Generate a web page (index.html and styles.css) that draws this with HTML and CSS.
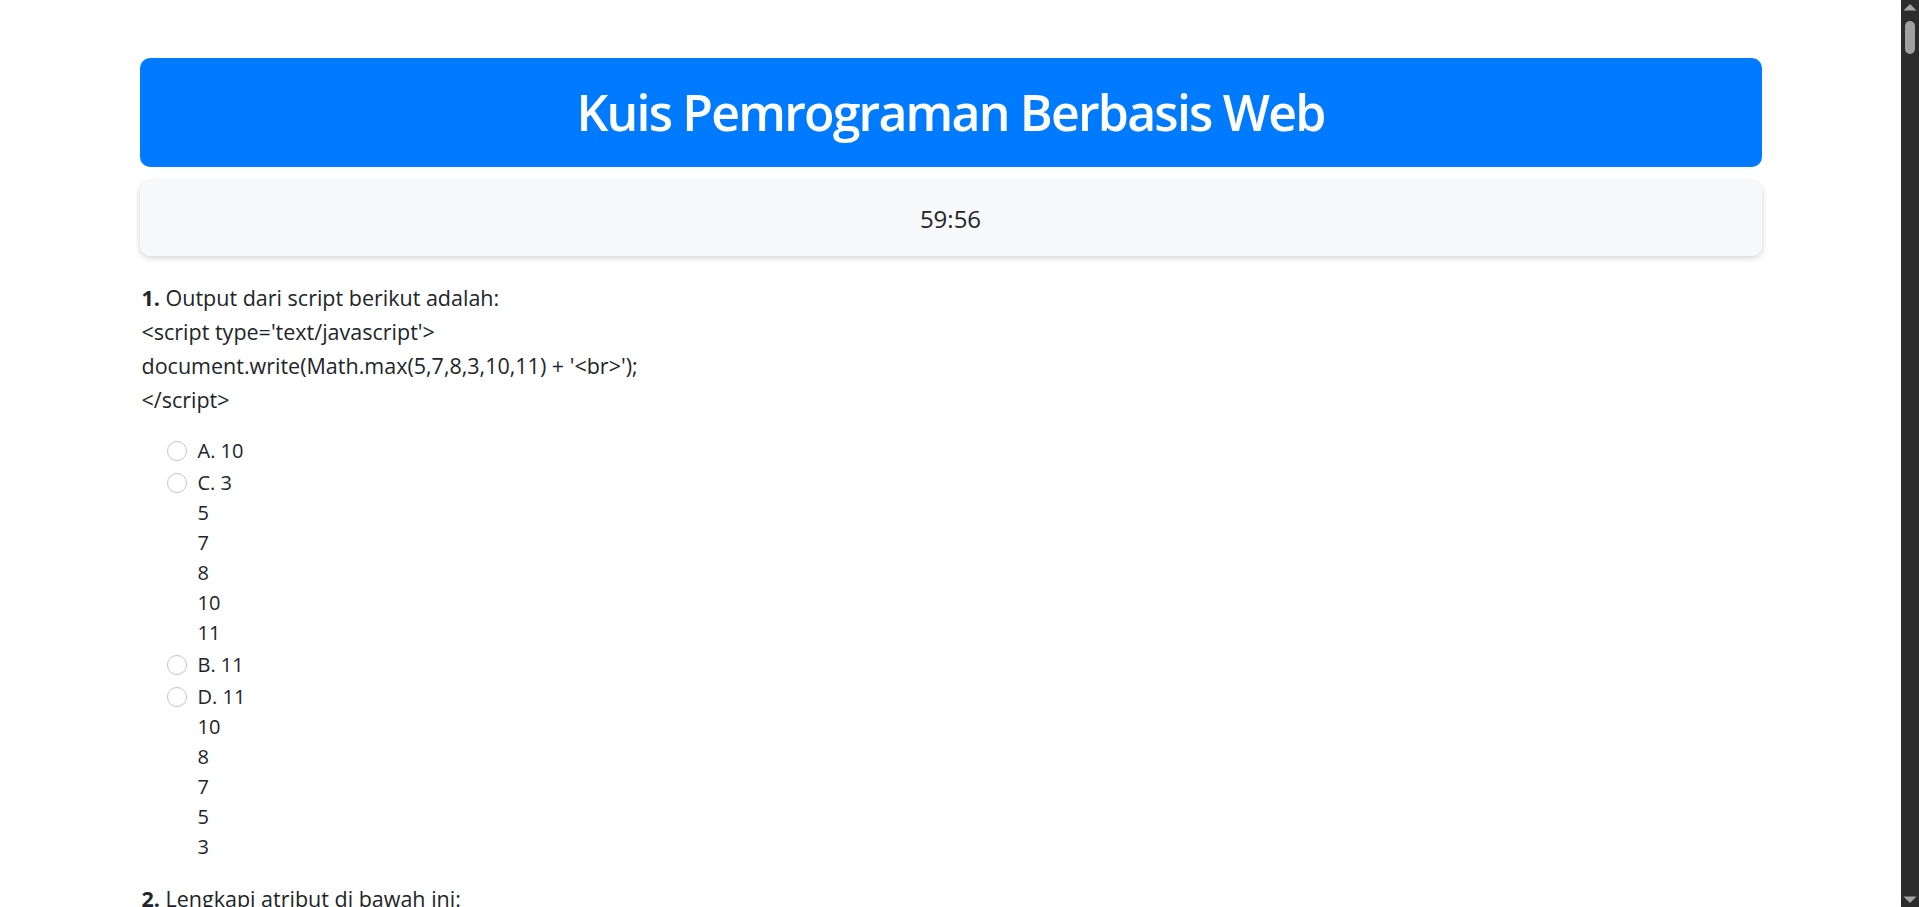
FILE: index.html
```html
<!DOCTYPE html>
<html lang="id">
<head>
<meta charset="utf-8">
<title>Kuis Pemrograman Berbasis Web</title>
<link rel="stylesheet" href="styles.css">
</head>
<body>
<div class="page">
  <header class="title-bar">
    <h1 class="title">Kuis Pemrograman Berbasis Web</h1>
  </header>
  <div class="timer">59:56</div>
  <form class="quiz">
    <div class="question">
      <p class="q-text"><strong>1.</strong> Output dari script berikut adalah:<br>&lt;script type='text/javascript'&gt;<br>document.write(Math.max(5,7,8,3,10,11) + '&lt;br&gt;');<br>&lt;/script&gt;</p>
      <div class="options">
        <label class="option"><input class="radio" type="radio" name="q1" value="A"><span class="opt-text">A. 10</span></label>
        <label class="option"><input class="radio" type="radio" name="q1" value="C"><span class="opt-text">C. 3<br>5<br>7<br>8<br>10<br>11</span></label>
        <label class="option"><input class="radio" type="radio" name="q1" value="B"><span class="opt-text">B. 11</span></label>
        <label class="option"><input class="radio" type="radio" name="q1" value="D"><span class="opt-text">D. 11<br>10<br>8<br>7<br>5<br>3</span></label>
      </div>
    </div>
    <div class="question">
      <p class="q-text"><strong>2.</strong> Lengkapi atribut di bawah ini:</p>
    </div>
  </form>
</div>
<aside class="scrollbar" aria-hidden="true">
  <svg class="sb-arrow" width="18" height="17" viewBox="0 0 18 17"><polygon points="9,4 15.5,10.5 2.5,10.5" fill="#a3a3a3"/></svg>
  <div class="sb-thumb"></div>
  <div class="sb-track"></div>
  <svg class="sb-arrow" width="18" height="17" viewBox="0 0 18 17"><polygon points="2.5,6.5 15.5,6.5 9,13" fill="#a3a3a3"/></svg>
</aside>
</body>
</html>
```
FILE: styles.css
```css
html {
  background: #ffffff;
}
body {
  margin: 0;
  padding-right: 18px;
  font-family: "Open Sans", "Noto Sans", sans-serif;
  color: #212529;
  background: #ffffff;
}
.page {
  max-width: 1622px;
  margin: 58px auto 0;
}
.title-bar {
  background: #007bff;
  border-radius: 10px;
  padding: 24px 20px 25px;
  text-align: center;
}
.title {
  margin: 0;
  color: #ffffff;
  font-size: 50px;
  font-weight: 600;
  line-height: 60px;
  letter-spacing: -1.8px;
}
.timer {
  margin-top: 14px;
  background: #f8f9fa;
  border-radius: 10px;
  box-shadow: 0 2px 6px rgba(0, 0, 0, 0.18);
  padding: 19px 20px 18px;
  text-align: center;
  font-size: 24px;
  line-height: 38px;
}
.quiz {
  margin-top: 25px;
}
.question {
  margin-bottom: 18px;
}
.q-text {
  margin: 0 0 19px 2px;
  font-size: 21.5px;
  line-height: 34px;
}
.q-text strong {
  font-weight: 700;
}
.options {
  display: flex;
  flex-direction: column;
  padding-left: 27px;
}
.option {
  display: flex;
  align-items: flex-start;
  gap: 11px;
  margin-bottom: 2px;
  font-size: 20px;
  line-height: 30px;
}
.radio {
  appearance: none;
  -webkit-appearance: none;
  flex: none;
  width: 20px;
  height: 20px;
  margin: 5px 0 0;
  border: 1px solid #c4c4c4;
  border-radius: 50%;
  background: #ffffff;
}
.radio:checked {
  border: 6px solid #007bff;
}
.scrollbar {
  position: fixed;
  top: 0;
  right: 0;
  width: 18px;
  height: 100vh;
  background: #2c2c2c;
  display: flex;
  flex-direction: column;
  align-items: center;
}
.sb-arrow {
  flex: none;
  display: block;
}
.sb-thumb {
  flex: none;
  width: 10px;
  height: 33px;
  margin-top: 4px;
  border-radius: 5px;
  background: #a0a0a0;
}
.sb-track {
  flex: 1;
}
```
